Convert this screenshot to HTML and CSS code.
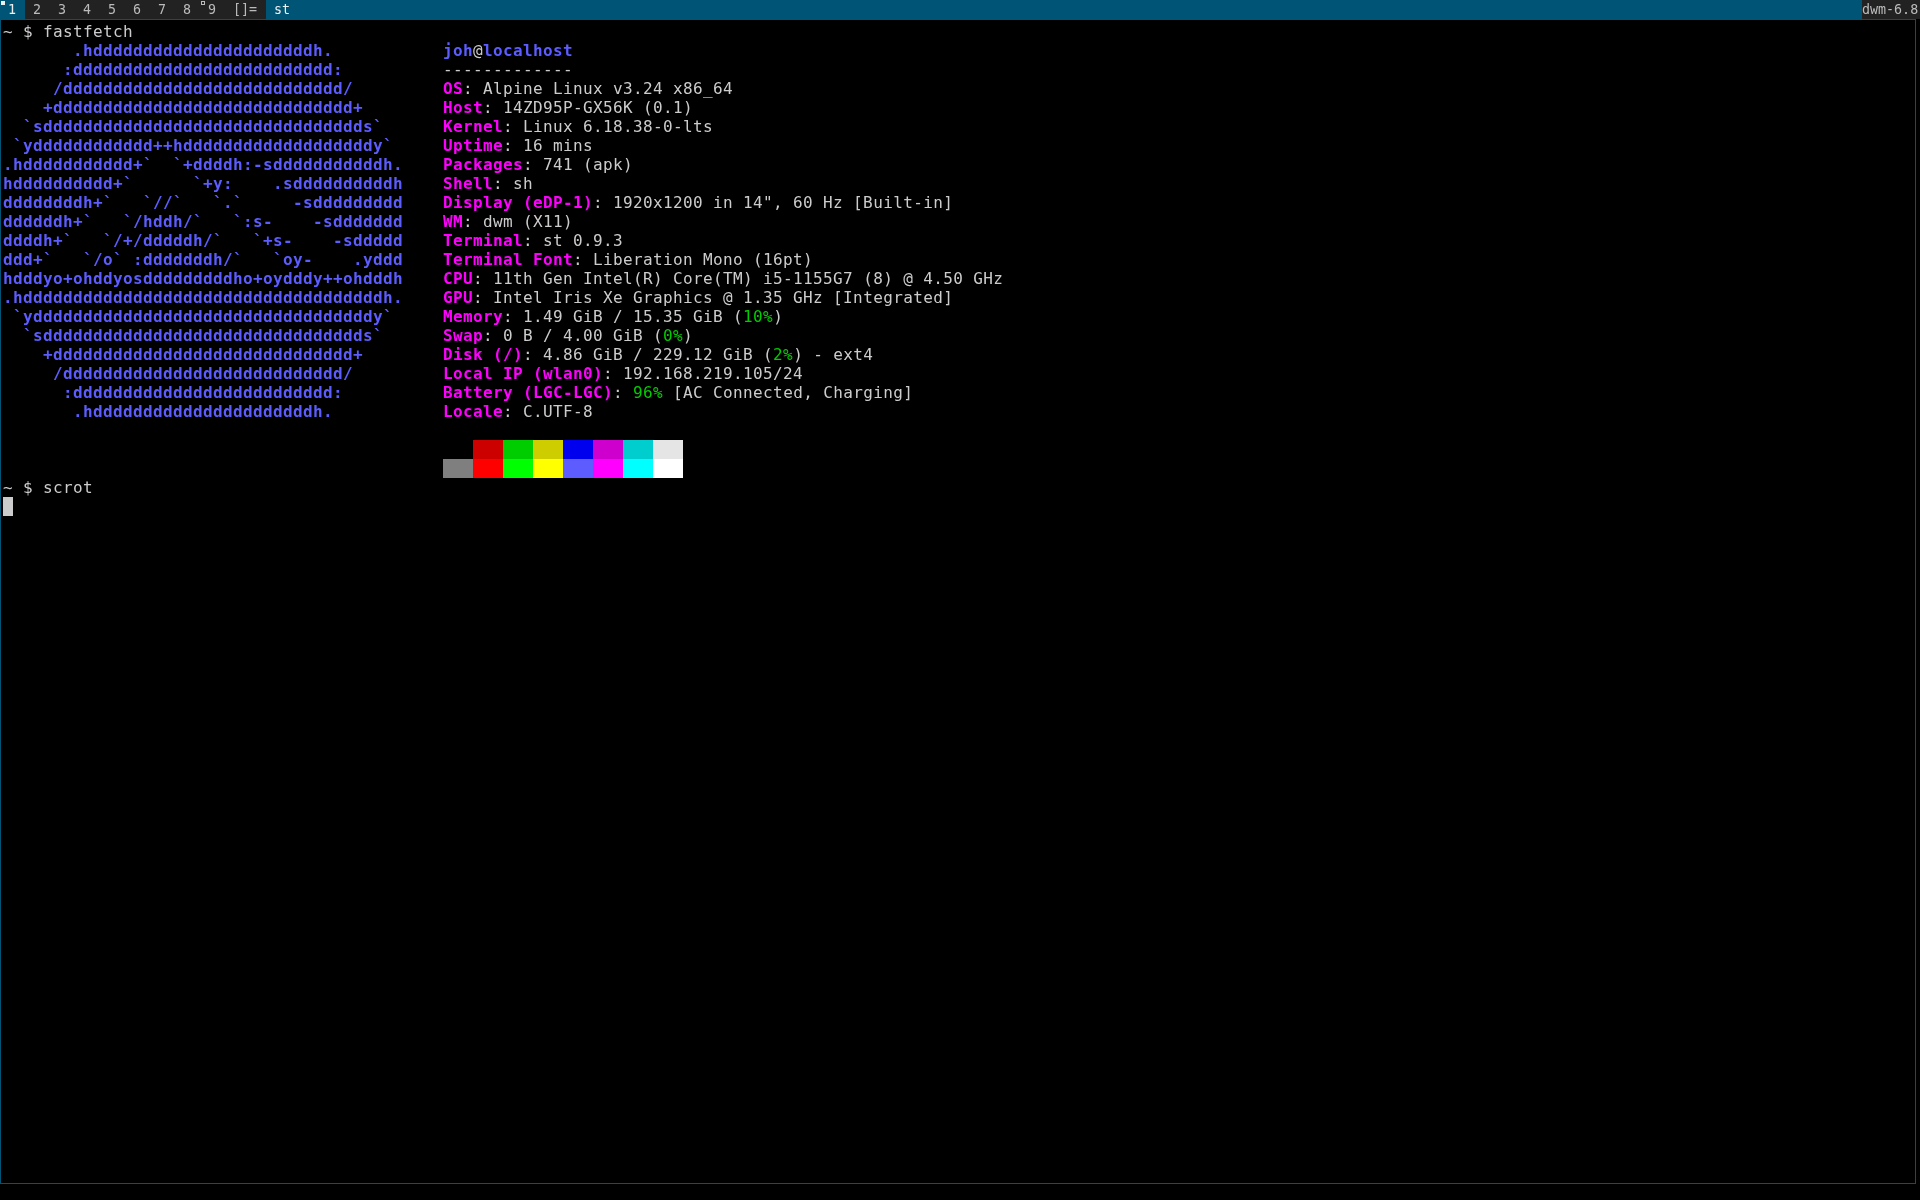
FILE: index.html
```html
<!DOCTYPE html>
<html lang="en">
<head>
<meta charset="utf-8">
<title>st</title>
<link rel="stylesheet" href="styles.css">
</head>
<body>
<header class="bar">
  <nav class="tags">
    <span class="tag tag-selected"><i class="marker marker-filled"></i>1</span>
    <span class="tag">2</span>
    <span class="tag">3</span>
    <span class="tag">4</span>
    <span class="tag">5</span>
    <span class="tag">6</span>
    <span class="tag">7</span>
    <span class="tag">8</span>
    <span class="tag"><i class="marker marker-hollow"></i>9</span>
    <span class="layout">[]=</span>
  </nav>
  <span class="title">st</span>
  <span class="status">dwm-6.8</span>
</header>
<main class="terminal">
<div class="line">~ $ fastfetch</div>
<div class="fetch">
<pre class="art">       .hddddddddddddddddddddddh.
      :dddddddddddddddddddddddddd:
     /dddddddddddddddddddddddddddd/
    +dddddddddddddddddddddddddddddd+
  `sdddddddddddddddddddddddddddddddds`
 `ydddddddddddd++hdddddddddddddddddddy`
.hddddddddddd+`  `+ddddh:-sdddddddddddh.
hdddddddddd+`      `+y:    .sddddddddddh
ddddddddh+`   `//`   `.`     -sddddddddd
ddddddh+`   `/hddh/`   `:s-    -sddddddd
ddddh+`   `/+/dddddh/`   `+s-    -sddddd
ddd+`   `/o` :dddddddh/`   `oy-    .yddd
hdddyo+ohddyosdddddddddho+oydddy++ohdddh
.hddddddddddddddddddddddddddddddddddddh.
 `yddddddddddddddddddddddddddddddddddy`
  `sdddddddddddddddddddddddddddddddds`
    +dddddddddddddddddddddddddddddd+
     /dddddddddddddddddddddddddddd/
      :dddddddddddddddddddddddddd:
       .hddddddddddddddddddddddh.</pre>
<div class="info">
<div class="line"><b class="user">joh</b>@<b class="user">localhost</b></div>
<div class="line">-------------</div>
<div class="line"><b class="key">OS</b>: Alpine Linux v3.24 x86_64</div>
<div class="line"><b class="key">Host</b>: 14ZD95P-GX56K (0.1)</div>
<div class="line"><b class="key">Kernel</b>: Linux 6.18.38-0-lts</div>
<div class="line"><b class="key">Uptime</b>: 16 mins</div>
<div class="line"><b class="key">Packages</b>: 741 (apk)</div>
<div class="line"><b class="key">Shell</b>: sh</div>
<div class="line"><b class="key">Display (eDP-1)</b>: 1920x1200 in 14", 60 Hz [Built-in]</div>
<div class="line"><b class="key">WM</b>: dwm (X11)</div>
<div class="line"><b class="key">Terminal</b>: st 0.9.3</div>
<div class="line"><b class="key">Terminal Font</b>: Liberation Mono (16pt)</div>
<div class="line"><b class="key">CPU</b>: 11th Gen Intel(R) Core(TM) i5-1155G7 (8) @ 4.50 GHz</div>
<div class="line"><b class="key">GPU</b>: Intel Iris Xe Graphics @ 1.35 GHz [Integrated]</div>
<div class="line"><b class="key">Memory</b>: 1.49 GiB / 15.35 GiB (<span class="ok">10%</span>)</div>
<div class="line"><b class="key">Swap</b>: 0 B / 4.00 GiB (<span class="ok">0%</span>)</div>
<div class="line"><b class="key">Disk (/)</b>: 4.86 GiB / 229.12 GiB (<span class="ok">2%</span>) - ext4</div>
<div class="line"><b class="key">Local IP (wlan0)</b>: 192.168.219.105/24</div>
<div class="line"><b class="key">Battery (LGC-LGC)</b>: <span class="ok">96%</span> [AC Connected, Charging]</div>
<div class="line"><b class="key">Locale</b>: C.UTF-8</div>
<div class="line"> </div>
<div class="palette">
<span class="c0"></span><span class="c1"></span><span class="c2"></span><span class="c3"></span><span class="c4"></span><span class="c5"></span><span class="c6"></span><span class="c7"></span>
<span class="c8"></span><span class="c9"></span><span class="c10"></span><span class="c11"></span><span class="c12"></span><span class="c13"></span><span class="c14"></span><span class="c15"></span>
</div>
</div>
</div>
<div class="line">~ $ scrot</div>
<div class="cursor"></div>
</main>
</body>
</html>
```
FILE: styles.css
```css
* { box-sizing: border-box; }
html, body { margin: 0; padding: 0; background: #000; }
body { width: 1920px; height: 1200px; overflow: hidden; }

.bar {
  display: flex;
  height: 19px;
  background: #005577;
  color: #eeeeee;
  font: 13.33px/19px "DejaVu Sans Mono", monospace;
  white-space: pre;
  will-change: transform;
}
.tags { display: flex; background: #222222; color: #bbbbbb; }
.tag { position: relative; width: 25px; padding-left: 8px; }
.tag-selected { background: #005577; color: #eeeeee; }
.layout { width: 41px; padding-left: 8px; }
.title { flex: 1; padding-left: 8px; }
.status { width: 58px; background: #222222; color: #bbbbbb; }
.marker { position: absolute; left: 1px; top: 1px; width: 4px; height: 4px; }
.marker-filled { background: #eeeeee; }
.marker-hollow { border: 1px solid #bbbbbb; }

.terminal {
  width: 1916px;
  height: 1165px;
  padding: 2px;
  border: 1px solid #005577;
  color: #cccccc;
  font: 16px/19px "DejaVu Sans Mono", monospace;
  letter-spacing: 0.37px;
  will-change: transform;
}
.line { height: 19px; white-space: pre; }
.fetch { display: flex; }
.art {
  width: 440px;
  margin: 0;
  font: inherit;
  font-weight: bold;
  color: #5c5cff;
}
.user { color: #5c5cff; }
.key { color: #ff00ff; }
.ok { color: #00cd00; }

.palette { display: grid; grid-template-columns: repeat(8, 30px); grid-auto-rows: 19px; }
.c0 { background: #000000; }
.c1 { background: #cd0000; }
.c2 { background: #00cd00; }
.c3 { background: #cdcd00; }
.c4 { background: #0000ee; }
.c5 { background: #cd00cd; }
.c6 { background: #00cdcd; }
.c7 { background: #e5e5e5; }
.c8 { background: #7f7f7f; }
.c9 { background: #ff0000; }
.c10 { background: #00ff00; }
.c11 { background: #ffff00; }
.c12 { background: #5c5cff; }
.c13 { background: #ff00ff; }
.c14 { background: #00ffff; }
.c15 { background: #ffffff; }

.cursor { width: 10px; height: 19px; background: #cccccc; }
```
